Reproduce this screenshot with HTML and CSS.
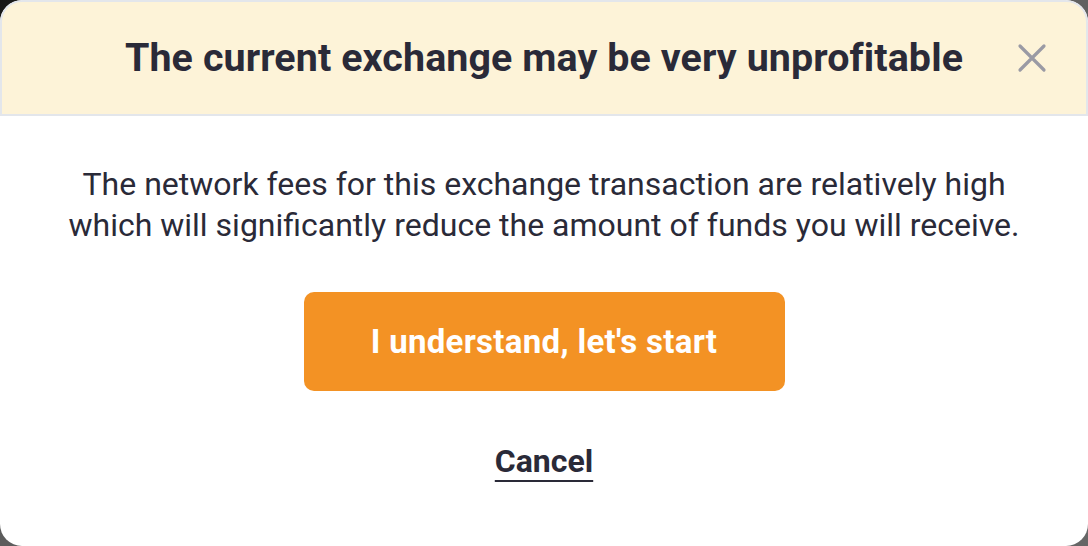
FILE: index.html
```html
<!DOCTYPE html>
<html>
<head>
<meta charset="utf-8">
<link rel="stylesheet" href="styles.css">
</head>
<body>
<div class="modal">
  <div class="header">
    <h1 class="title">The current exchange may be very unprofitable</h1>
    <button class="close" aria-label="Close">
      <svg width="30" height="30" viewBox="0 0 30 30"><path d="M3 3 L27 27 M27 3 L3 27" stroke="#9a9aa4" stroke-width="3.2" stroke-linecap="round" fill="none"/></svg>
    </button>
  </div>
  <div class="content">
    <p class="message">The network fees for this exchange transaction are relatively high<br>which will significantly reduce the amount of funds you will receive.</p>
    <button class="primary">I understand, let's start</button>
    <a class="cancel" href="#">Cancel</a>
  </div>
</div>
</body>
</html>
```
FILE: styles.css
```css
html, body {
  margin: 0;
  padding: 0;
  width: 1088px;
  height: 546px;
  overflow: hidden;
}
body {
  background: linear-gradient(135deg, #161616 0%, #5a5a5a 20%, #666 100%);
  font-family: Roboto, "Liberation Sans", sans-serif;
  color: #2a2a38;
}
.modal {
  width: 1088px;
  height: 546px;
  background: #fff;
  border-radius: 22px;
  overflow: hidden;
  display: flex;
  flex-direction: column;
}
.header {
  height: 112px;
  box-sizing: content-box;
  background: #fdf3d8;
  border: 2px solid #e3e6eb;
  border-top-left-radius: 22px;
  border-top-right-radius: 22px;
  display: flex;
  align-items: center;
  justify-content: center;
  position: relative;
}
.title {
  margin: 0;
  font-size: 39.4px;
  font-weight: 700;
  letter-spacing: 0.1px;
  color: #2a2a38;
  padding-bottom: 2px;
}
.close {
  position: absolute;
  right: 39px;
  top: 41px;
  width: 30px;
  height: 30px;
  padding: 0;
  border: none;
  background: none;
}
.close svg { display: block; }
.content {
  display: flex;
  flex-direction: column;
  align-items: center;
  padding-top: 48px;
}
.message {
  margin: 0;
  font-size: 32px;
  line-height: 41px;
  text-align: center;
  color: #2a2a38;
}
.primary {
  margin-top: 46px;
  width: 481px;
  height: 99px;
  border: none;
  border-radius: 10px;
  background: #f39224;
  color: #fff;
  font-family: Roboto, "Liberation Sans", sans-serif;
  font-size: 33px;
  font-weight: 700;
  letter-spacing: 0.3px;
}
.cancel {
  margin-top: 51px;
  font-size: 32px;
  font-weight: 700;
  color: #2a2a38;
  text-decoration: underline;
  text-decoration-thickness: 2px;
  text-underline-offset: 8px;
}
```
